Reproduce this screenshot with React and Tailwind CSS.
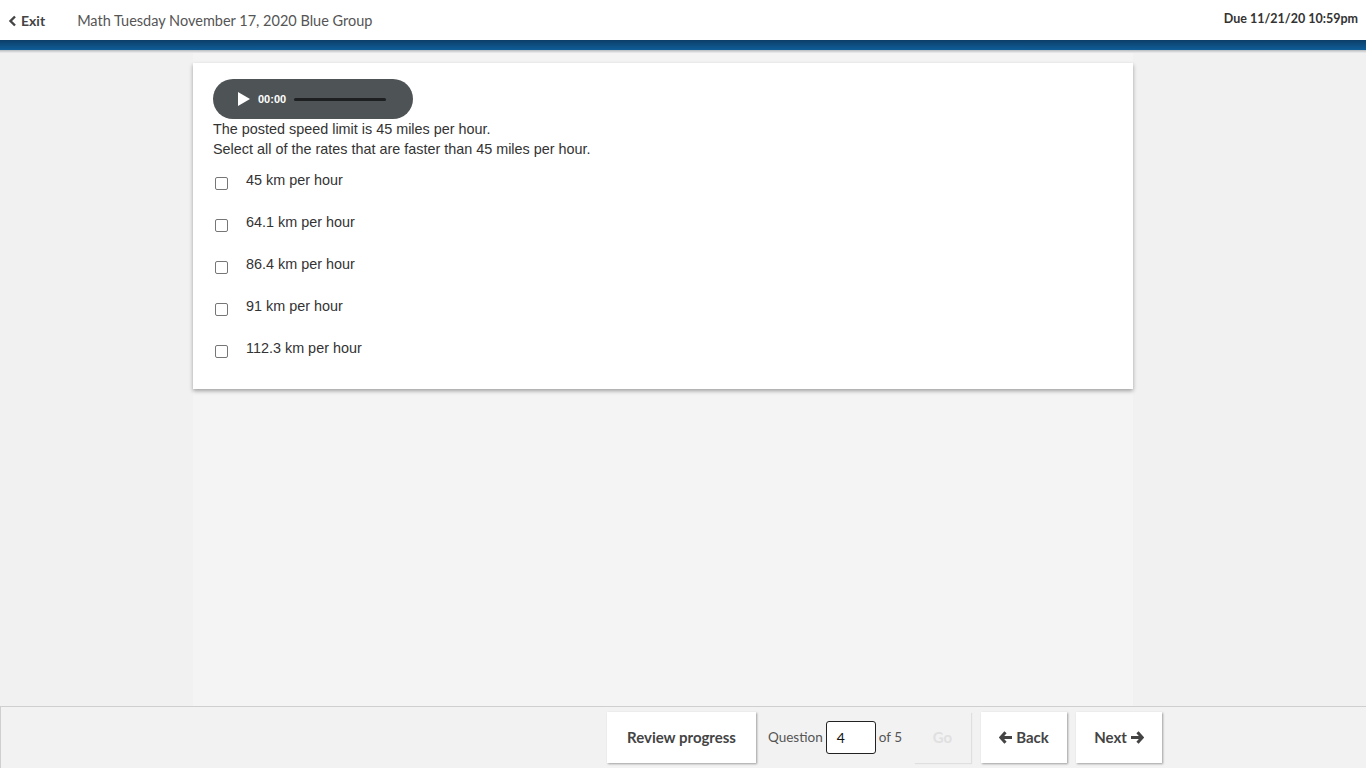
import React from 'react';

const options = ['45 km per hour', '64.1 km per hour', '86.4 km per hour', '91 km per hour', '112.3 km per hour'];

const App = () => {
  return (
    <div className="w-[1366px] h-[768px] flex flex-col bg-[#f1f1f1] overflow-hidden" style={{ fontFamily: 'Lato, sans-serif' }}>
      {/* Header */}
      <div className="h-[40px] bg-white flex items-center justify-between pl-[8px] pr-[8px] shrink-0">
        <div className="flex items-center mt-[1px]">
          <button className="flex items-center gap-[4px] text-[14px] font-bold text-[#444]">
            <svg width="9" height="12" viewBox="0 0 9 12"><path d="M7 1.5 L2.5 6 L7 10.5" stroke="#444" strokeWidth="2.4" fill="none" /></svg>
            Exit
          </button>
          <span className="ml-[32px] text-[14.5px] text-[#555]">Math Tuesday November 17, 2020 Blue Group</span>
        </div>
        <span className="text-[12.5px] font-bold text-[#333] -mt-[2px]">Due 11/21/20 10:59pm</span>
      </div>
      <div className="h-[10px] shrink-0 bg-gradient-to-b from-[#0c3f68] to-[#0f5d99]" />
      <div className="h-[3px] shrink-0 bg-gradient-to-b from-[#b8bcc0] to-[#eeeeee]" />

      {/* Main */}
      <div className="flex-1 flex pl-[193px]">
        <div className="w-[940px] bg-[#f4f4f4] pt-[10px]">
          <div className="bg-white shadow-[0_2px_4px_rgba(0,0,0,0.35)] pt-[16px] pb-[31px] px-[20px]" style={{ fontFamily: '"Liberation Sans", Arial, sans-serif' }}>
            <div className="w-[200px] h-[40px] rounded-full bg-[#4e5355] flex items-center pl-[24px]">
              <svg width="14" height="16" viewBox="0 0 14 16"><path d="M1 1 L13 8 L1 15 Z" fill="#fff" /></svg>
              <span className="ml-[7px] text-[11px] font-bold text-white">00:00</span>
              <div className="ml-[8px] w-[92px] h-[3px] bg-[#1d1f20] rounded" />
            </div>
            <p className="text-[14.4px] leading-[20px] text-[#333]">The posted speed limit is 45 miles per hour.</p>
            <p className="text-[14.4px] leading-[20px] text-[#333]">Select all of the rates that are faster than 45 miles per hour.</p>
            <div className="mt-[11px] flex flex-col gap-[22px]">
              {options.map((o) => (
                <label key={o} className="flex items-start h-[20px]">
                  <span className="mt-[7px] ml-[2px] w-[13px] h-[13px] border border-[#767676] rounded-[2px] bg-white" />
                  <span className="ml-[18px] text-[14.4px] leading-[20px] text-[#333]">{o}</span>
                </label>
              ))}
            </div>
          </div>
        </div>
      </div>

      {/* Footer */}
      <div className="h-[62px] shrink-0 border-t border-l border-[#cfcfcf] bg-[#f2f2f2] flex items-center pl-[606px] gap-0">
        <button className="h-[51px] w-[149px] bg-white shadow-[1px_1px_2px_rgba(0,0,0,0.35)] text-[15px] font-bold text-[#444]">Review progress</button>
        <div className="flex items-center ml-[12px] text-[13.5px] text-[#555]">
          <span>Question</span>
          <div className="ml-[3px] w-[50px] h-[33px] border border-[#222] rounded-[3px] bg-white flex items-center pl-[10px] text-[14px] text-[#111]">4</div>
          <span className="ml-[3px]">of 5</span>
        </div>
        <button className="ml-[12px] h-[51px] w-[57px] bg-[#f2f2f2] shadow-[1px_1px_1px_rgba(0,0,0,0.08)] text-[15px] font-bold text-[#e0e0e0]">Go</button>
        <button className="ml-[10px] h-[51px] w-[86px] bg-white shadow-[1px_1px_2px_rgba(0,0,0,0.35)] text-[15px] font-bold text-[#444] flex items-center justify-center gap-[3px]">
          <svg width="14" height="13" viewBox="0 0 14 13"><path d="M6.5 1.2 L1.8 6.5 L6.5 11.8 M2 6.5 H13" stroke="#444" strokeWidth="3" fill="none" /></svg>
          Back
        </button>
        <button className="ml-[9px] h-[51px] w-[86px] bg-white shadow-[1px_1px_2px_rgba(0,0,0,0.35)] text-[15px] font-bold text-[#444] flex items-center justify-center gap-[3px]">
          Next
          <svg width="14" height="13" viewBox="0 0 14 13"><path d="M7.5 1.2 L12.2 6.5 L7.5 11.8 M12 6.5 H1" stroke="#444" strokeWidth="3" fill="none" /></svg>
        </button>
      </div>
    </div>
  );
};

export default App;
